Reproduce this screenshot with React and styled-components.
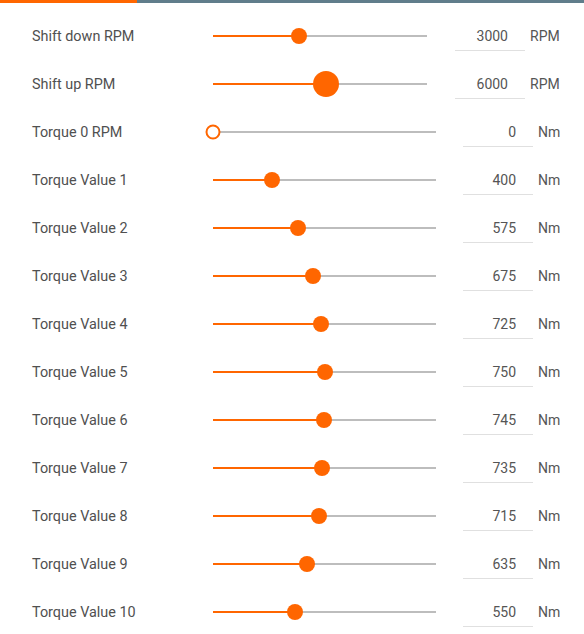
import styled, { createGlobalStyle } from "styled-components";

const ORANGE = "#ff6600";

const GlobalStyle = createGlobalStyle`
  html, body {
    margin: 0;
    padding: 0;
    background: #fff;
    overflow: hidden;
    font-family: Roboto, "Liberation Sans", sans-serif;
  }
`;

// first row is scrolled out of view, only its input underline shows
const rows = [
  { label: "", value: "", unit: "", pct: 60, hidden: true },
  { label: "Shift down RPM", value: 3000, unit: "RPM", pct: 40 },
  { label: "Shift up RPM", value: 6000, unit: "RPM", pct: 52.6, active: true },
  { label: "Torque 0 RPM", value: 0, unit: "Nm" },
  { label: "Torque Value 1", value: 400, unit: "Nm" },
  { label: "Torque Value 2", value: 575, unit: "Nm" },
  { label: "Torque Value 3", value: 675, unit: "Nm" },
  { label: "Torque Value 4", value: 725, unit: "Nm" },
  { label: "Torque Value 5", value: 750, unit: "Nm" },
  { label: "Torque Value 6", value: 745, unit: "Nm" },
  { label: "Torque Value 7", value: 735, unit: "Nm" },
  { label: "Torque Value 8", value: 715, unit: "Nm" },
  { label: "Torque Value 9", value: 635, unit: "Nm" },
  { label: "Torque Value 10", value: 550, unit: "Nm" },
];

export default function App() {
  return (
    <>
      <GlobalStyle />
      <Progress>
        <ProgressFill />
      </Progress>
      <List>
        {rows.map((r, i) => {
          const pct = r.pct !== undefined ? r.pct : (r.value / 1500) * 100;
          const wide = r.unit !== "Nm";
          return (
            <Row key={i}>
              <Label>{r.label}</Label>
              <Slider>
                {!r.hidden && <Fill style={{ width: `${pct}%` }} />}
                {!r.hidden && (
                  <Knob style={{ left: `${pct}%` }} $active={r.active} $empty={r.value === 0} />
                )}
              </Slider>
              <ValueInput value={r.value} readOnly $wide={wide} />
              <Unit $wide={wide}>{r.unit}</Unit>
            </Row>
          );
        })}
      </List>
    </>
  );
}

const Progress = styled.div`
  position: fixed;
  top: 0;
  left: 0;
  right: 0;
  height: 3px;
  background: #607d8b;
  z-index: 2;
`;

const ProgressFill = styled.div`
  width: 137px;
  height: 100%;
  background: ${ORANGE};
`;

const List = styled.div`
  margin-top: -36px;
  display: flex;
  flex-direction: column;
`;

const Row = styled.div`
  height: 48px;
  display: flex;
  align-items: center;
  padding: 0 24px 0 32px;
  box-sizing: border-box;
`;

const Label = styled.div`
  width: 181px;
  flex-shrink: 0;
  font-size: 14.4px;
  color: #505050;
`;

const Slider = styled.div`
  position: relative;
  flex: 1;
  height: 2px;
  background: #bdbdbd;
`;

const Fill = styled.div`
  height: 100%;
  background: ${ORANGE};
`;

const Knob = styled.div`
  position: absolute;
  top: 50%;
  width: ${p => (p.$active ? 26 : p.$empty ? 15 : 16)}px;
  height: ${p => (p.$active ? 26 : p.$empty ? 15 : 16)}px;
  box-sizing: border-box;
  border-radius: 50%;
  transform: translate(-50%, -50%);
  background: ${p => (p.$empty ? "#fff" : ORANGE)};
  border: ${p => (p.$empty ? `2px solid ${ORANGE}` : "none")};
`;

const ValueInput = styled.input`
  width: 70px;
  height: 29px;
  margin: 1px 0 0 ${p => (p.$wide ? 28 : 27)}px;
  padding: 0 17px 0 0;
  box-sizing: border-box;
  border: none;
  border-bottom: 1px solid #e0e0e0;
  font-family: Roboto, "Liberation Sans", sans-serif;
  font-size: 14px;
  color: #555;
  text-align: right;
  background: transparent;
  outline: none;
`;

const Unit = styled.span`
  margin-left: 5px;
  width: ${p => (p.$wide ? 30 : 22)}px;
  white-space: nowrap;
  font-size: 14px;
  color: #555;
`;
